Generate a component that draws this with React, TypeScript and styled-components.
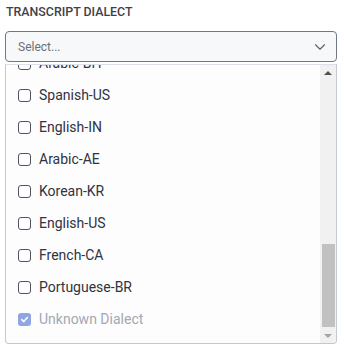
import { FC, useLayoutEffect, useRef } from "react";
import styled, { createGlobalStyle } from "styled-components";
import { ChevronDown } from "lucide-react";

const GlobalStyle = createGlobalStyle`
  html, body {
    margin: 0;
    padding: 0;
    background: #ffffff;
    font-family: Roboto, "Liberation Sans", sans-serif;
  }
`;

const Wrapper = styled.div`
  width: 344px;
  padding: 4px 7px 0 5px;
  box-sizing: border-box;
`;

const Label = styled.div`
  font-size: 12.4px;
  font-weight: 500;
  line-height: 16px;
  color: #3f4147;
  padding-left: 1px;
  margin-bottom: 11px;
`;

const SelectBox = styled.div`
  height: 31px;
  box-sizing: border-box;
  display: flex;
  align-items: center;
  justify-content: space-between;
  padding: 0 7px 0 12px;
  border: 1px solid #6f7789;
  border-radius: 4px;
  background-color: #f7f8fa;
`;

const Placeholder = styled.span`
  font-size: 12px;
  color: #6c6f76;
`;

const Menu = styled.div`
  margin-top: 2px;
  height: 280px;
  box-sizing: border-box;
  display: flex;
  border: 1px solid #c3c8d6;
  border-top-color: #dde0e8;
  border-radius: 0 0 4px 4px;
  background-color: #fdfdfe;
  overflow: hidden;
`;

const Viewport = styled.div`
  flex: 1;
  overflow: hidden;
  padding: 8px 0;
`;

const OptionRow = styled.div<{ $disabled?: boolean }>`
  height: 32px;
  display: flex;
  align-items: center;
  gap: 8px;
  padding-left: 12px;
  font-size: 14px;
  color: ${(p) => (p.$disabled ? "#a4a7b1" : "#2f3440")};
`;

const Box = styled.span<{ $checked?: boolean }>`
  width: 13px;
  height: 13px;
  box-sizing: border-box;
  border-radius: 3px;
  display: inline-flex;
  align-items: center;
  justify-content: center;
  flex-shrink: 0;
  border: ${(p) => (p.$checked ? "none" : "1.5px solid #50545f")};
  background-color: ${(p) => (p.$checked ? "#8fa6e2" : "#ffffff")};
`;

const Scrollbar = styled.div`
  width: 16px;
  flex-shrink: 0;
  display: flex;
  flex-direction: column;
  background-color: #f1f1f1;
`;

const ArrowButton = styled.div`
  height: 15px;
  flex-shrink: 0;
  display: flex;
  align-items: center;
  justify-content: center;
`;

const Triangle = styled.span<{ $down?: boolean }>`
  width: 0;
  height: 0;
  border-left: 4px solid transparent;
  border-right: 4px solid transparent;
  ${(p) =>
    p.$down
      ? "border-top: 4px solid #a3a3a3;"
      : "border-bottom: 4px solid #505050;"}
`;

const Track = styled.div`
  flex: 1;
  display: flex;
  flex-direction: column;
  justify-content: flex-end;
  padding: 0 1px 1px 2px;
`;

const Thumb = styled.div`
  height: 83px;
  background-color: #c1c1c1;
`;

const options = [
  "Arabic-SA",
  "Arabic-EG",
  "English-GB",
  "English-AU",
  "Spanish-ES",
  "Spanish-MX",
  "French-FR",
  "German-DE",
  "German-CH",
  "Italian-IT",
  "Japanese-JP",
  "Chinese-CN",
  "Hindi-IN",
  "Dutch-NL",
  "Russian-RU",
  "Portuguese-PT",
  "Arabic-BH",
  "Spanish-US",
  "English-IN",
  "Arabic-AE",
  "Korean-KR",
  "English-US",
  "French-CA",
  "Portuguese-BR",
];

const App: FC = () => {
  const listRef = useRef<HTMLDivElement>(null);

  useLayoutEffect(() => {
    const el = listRef.current;
    if (el) el.scrollTop = el.scrollHeight;
  }, []);

  return (
    <>
      <GlobalStyle />
      <Wrapper>
        <Label>TRANSCRIPT DIALECT</Label>
        <SelectBox>
          <Placeholder>Select...</Placeholder>
          <ChevronDown size={18} strokeWidth={1.5} color="#5d6270" />
        </SelectBox>
        <Menu>
          <Viewport ref={listRef}>
            {options.map((o) => (
              <OptionRow key={o}>
                <Box />
                {o}
              </OptionRow>
            ))}
            <OptionRow $disabled>
              <Box $checked>
                <svg width="9" height="9" viewBox="0 0 10 10">
                  <path
                    d="M2 5.2 L4.2 7.3 L8.2 2.8"
                    fill="none"
                    stroke="#ffffff"
                    strokeWidth="1.8"
                    strokeLinecap="round"
                    strokeLinejoin="round"
                  />
                </svg>
              </Box>
              Unknown Dialect
            </OptionRow>
          </Viewport>
          <Scrollbar>
            <ArrowButton>
              <Triangle />
            </ArrowButton>
            <Track>
              <Thumb />
            </Track>
            <ArrowButton>
              <Triangle $down />
            </ArrowButton>
          </Scrollbar>
        </Menu>
      </Wrapper>
    </>
  );
};

export default App;
